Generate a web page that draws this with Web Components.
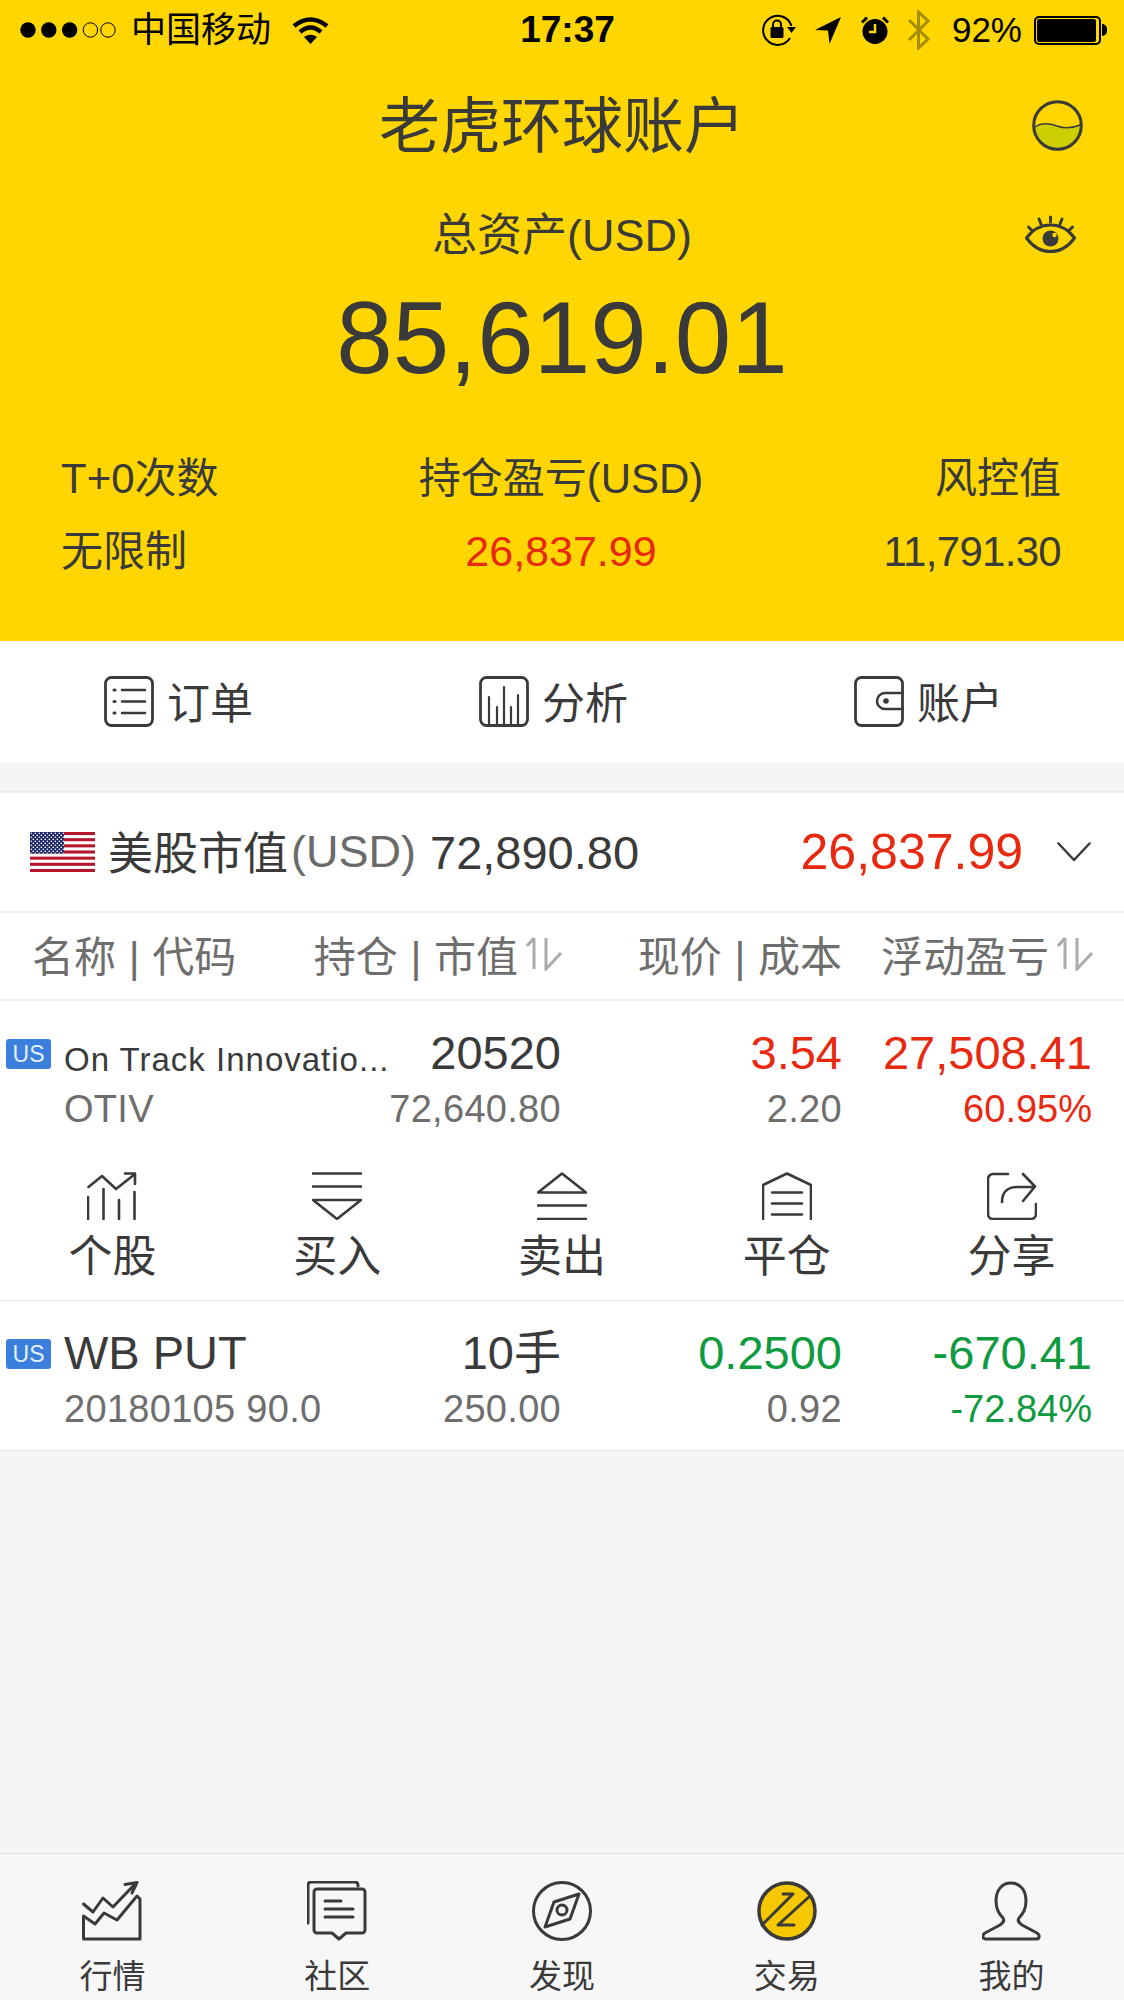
<!DOCTYPE html>
<html lang="zh">
<head>
<meta charset="utf-8">
<title>老虎环球账户</title>
<style>
    html, body { margin: 0; height: 100%; }
    body {
        font-family: "Liberation Sans", "Noto Sans CJK SC", sans-serif;
        color: #3a3a3a;
        background: #f5f5f5;
    }
</style>
</head>
<body>
<app-shell>
    <status-bar></status-bar>
    <account-header></account-header>
    <action-bar></action-bar>
    <market-summary></market-summary>
    <position-header></position-header>
    <position-row name="On Track Innovatio..." small-name code="OTIV" qty="20520" value="72,640.80"
        price="3.54" cost="2.20" pnl="27,508.41" pct="60.95%" tone="up">
        <tool-row></tool-row>
    </position-row>
    <position-row name="WB PUT" code="20180105 90.0" qty="10手" value="250.00"
        price="0.2500" cost="0.92" pnl="-670.41" pct="-72.84%" tone="down"></position-row>
    <tab-bar></tab-bar>
</app-shell>

<script>
const LINE = 'fill="none" stroke="#3a3a3a" stroke-linecap="round" stroke-linejoin="round"';

class AppShell extends HTMLElement {
    constructor() {
        super();
        this.attachShadow({ mode: 'open' });
    }
    connectedCallback() {
        this.shadowRoot.innerHTML = `
            <style>
                :host { display: flex; flex-direction: column; height: 2000px; overflow: hidden; }
                ::slotted(tab-bar) { margin-top: auto; }
            </style>
            <slot></slot>
        `;
    }
}
customElements.define('app-shell', AppShell);

class StatusBar extends HTMLElement {
    constructor() {
        super();
        this.attachShadow({ mode: 'open' });
    }
    connectedCallback() {
        this.shadowRoot.innerHTML = `
            <style>
                :host {
                    display: grid;
                    grid-template-columns: 1fr auto 1fr;
                    align-items: center;
                    height: 60px;
                    padding: 0 17px 0 20px;
                    background: #ffd600;
                    color: #000;
                    font-size: 35px;
                }
                .left, .right { display: flex; align-items: center; }
                .right { justify-content: flex-end; }
                .carrier { margin: 0 21px 0 15px; line-height: 60px; }
                .time { font-weight: 700; font-size: 37px; margin-left: 8px; }
                .battery { width: 67px; height: 29px; box-sizing: border-box; border: 2px solid #000; border-radius: 5px; padding: 1px; background: #ffd600; margin-left: 12px; }
                .battery i { display: block; height: 100%; width: 96%; background: #000; border-radius: 2px; }
                .nub { width: 5px; height: 12px; background: #000; border-radius: 0 5px 5px 0; margin-left: 1px; }
                svg { display: block; flex: none; }
            </style>
            <div class="left">
                <svg width="96" height="16" viewBox="0 0 96 16">
                    <circle cx="8" cy="8" r="7.7"/>
                    <circle cx="28.8" cy="8" r="7.7"/>
                    <circle cx="49.6" cy="8" r="7.7"/>
                    <circle cx="70.4" cy="8" r="7.2" fill="none" stroke="#000" stroke-width="1"/>
                    <circle cx="88" cy="8" r="7.2" fill="none" stroke="#000" stroke-width="1"/>
                </svg>
                <span class="carrier">中国移动</span>
                <svg width="37" height="28" viewBox="0 0 37 28">
                    <path d="M2 10Q18.500 -3 35 10" fill="none" stroke="#000" stroke-width="4.500"/>
                    <path d="M8 16Q18.500 7 29 16" fill="none" stroke="#000" stroke-width="4.500"/>
                    <path d="M12 21Q18.500 16.500 25 21L18.500 28Z"/>
                </svg>
            </div>
            <div class="time">17:37</div>
            <div class="right">
                <svg width="34" height="32" viewBox="0 0 34 32" style="margin-right:19px">
                    <path d="M28 24A14.500 14.500 0 1 1 29.500 12" fill="none" stroke="#000" stroke-width="2"/>
                    <path d="M25 13H34L29.500 19Z"/>
                    <rect x="8.500" y="13" width="13" height="11" rx="1.500"/>
                    <path d="M11 14V10.500a4 4 0 0 1 8 0V14" fill="none" stroke="#000" stroke-width="2"/>
                </svg>
                <svg width="26" height="27" viewBox="0 0 26 27" style="margin-right:20px">
                    <path d="M26 0L0 13L13 13.500L14.500 27Z"/>
                </svg>
                <svg width="28" height="28" viewBox="0 0 28 28" style="margin-right:18px">
                    <circle cx="14" cy="15.500" r="12.500"/>
                    <path d="M14 8V16H8" fill="none" stroke="#ffd600" stroke-width="2.500"/>
                    <path d="M1 6.500L6 1.500M27 6.500L22 1.500" stroke="#000" stroke-width="3"/>
                </svg>
                <svg width="23" height="40" viewBox="0 0 23 40" style="margin-right:22px">
                    <path d="M2 10L21 29L11.500 38V2L21 11L2 30" fill="none" stroke="#a58d05" stroke-width="3"/>
                </svg>
                <span>92%</span>
                <div class="battery"><i></i></div>
                <div class="nub"></div>
            </div>
        `;
    }
}
customElements.define('status-bar', StatusBar);

class StatCell extends HTMLElement {
    constructor() {
        super();
        this.attachShadow({ mode: 'open' });
    }
    connectedCallback() {
        const alinear = this.getAttribute('align') || 'left';
        const tono = this.getAttribute('tone') === 'up' ? '#e8290f' : 'inherit';
        this.shadowRoot.innerHTML = `
            <style>
                :host { display: block; text-align: ${alinear}; font-size: 42px; line-height: 73px; }
                .value { color: ${tono}; }
                :host([tone]) .value { font-size: 43px; }
                :host([tight]) .value { letter-spacing: -0.7px; }
            </style>
            <div>${this.getAttribute('label')}</div>
            <div class="value">${this.getAttribute('value')}</div>
        `;
    }
}
customElements.define('stat-cell', StatCell);

class AccountHeader extends HTMLElement {
    constructor() {
        super();
        this.attachShadow({ mode: 'open' });
    }
    connectedCallback() {
        this.shadowRoot.innerHTML = `
            <style>
                :host {
                    display: block;
                    position: relative;
                    height: 581px;
                    background: #ffd600;
                    text-align: center;
                }
                .title { font-size: 61px; line-height: 80px; padding-top: 27px; }
                .label { font-size: 45px; line-height: 60px; margin-top: 39px; }
                .amount { font-size: 101.500px; line-height: 120px; margin-top: 12px; }
                .stats {
                    display: grid;
                    grid-template-columns: 1fr 1fr 1fr;
                    padding: 0 63px 0 61px;
                    margin-top: 44px;
                }
                .globe, .eye { position: absolute; }
                .globe { left: 1032px; top: 40px; }
                .eye { left: 1025px; top: 155px; }
            </style>
            <div class="title">老虎环球账户</div>
            <div class="label">总资产(USD)</div>
            <div class="amount">85,619.01</div>
            <div class="stats">
                <stat-cell label="T+0次数" value="无限制"></stat-cell>
                <stat-cell align="center" label="持仓盈亏(USD)" value="26,837.99" tone="up"></stat-cell>
                <stat-cell align="right" label="风控值" value="11,791.30" tight></stat-cell>
            </div>
            <svg class="globe" width="51" height="51" viewBox="0 0 51 51">
                <path d="M3 27C10 22 17 23 25 26C33 29 41 28 48 25C48 40 38 49 25.500 49C13 49 3 40 3 27Z" fill="#cdcf00"/>
                <path d="M3 27C10 22 17 23 25 26C33 29 41 28 48 25" fill="none" stroke="#3a3a3a" stroke-width="1.500"/>
                <circle cx="25.500" cy="25.500" r="23.800" fill="none" stroke="#3a3a3a" stroke-width="3"/>
            </svg>
            <svg class="eye" width="51" height="38" viewBox="0 0 51 38" ${LINE}>
                <path d="M1.500 23C8 14 16 10 25.500 10C35 10 43 14 49.500 23C43 32 35 36.500 25.500 36.500C16 36.500 8 32 1.500 23Z" stroke-width="3"/>
                <circle cx="25.500" cy="23.500" r="8" fill="#3a3a3a" stroke="none"/>
                <circle cx="29.500" cy="20" r="2.200" fill="#ffd600" stroke="none"/>
                <path d="M25.500 2V7M14 4L16 9M37 4L35 9M3.500 12L7 15.500M47.500 12L44 15.500" stroke-width="3"/>
            </svg>
        `;
    }
}
customElements.define('account-header', AccountHeader);

class ActionBar extends HTMLElement {
    constructor() {
        super();
        this.attachShadow({ mode: 'open' });
    }
    connectedCallback() {
        const acciones = [
            {
                texto: "订单",
                icono: `<path d="M18 14H41M18 25.500H41M18 37H41" stroke-width="2.500"/>
                        <path d="M10 14H11M10 25.500H11M10 37H11" stroke-width="3"/>`
            },
            {
                texto: "分析",
                icono: `<path d="M10 49V21M18 49V31M25 49V11M32 49V31M39 49V19" stroke-width="2.200"/>`
            },
            {
                texto: "账户",
                icono: `<path d="M49 17H31a8 8 0 0 0 0 16H49" stroke-width="2.500"/>
                        <circle cx="32" cy="25" r="2.800" fill="#3a3a3a" stroke="none"/>`
            }
        ];
        this.shadowRoot.innerHTML = `
            <style>
                :host {
                    display: flex;
                    gap: 226px;
                    align-items: center;
                    height: 121px;
                    padding-left: 104px;
                    background: #fff;
                    border-bottom: 29px solid #f5f5f5;
                    font-size: 43px;
                    white-space: nowrap;
                }
                .item { display: flex; align-items: center; gap: 13px; }
                span { transform: translateY(-2px); }
                svg { display: block; flex: none; }
            </style>
            ${acciones.map((accion)=>`
                <div class="item">
                    <svg width="50" height="51" viewBox="0 0 50 51" ${LINE}>
                        <rect x="1.500" y="1.500" width="47" height="48" rx="6" stroke-width="2.800"/>
                        ${accion.icono}
                    </svg>
                    <span>${accion.texto}</span>
                </div>
            `).join('')}
        `;
    }
}
customElements.define('action-bar', ActionBar);

class MarketSummary extends HTMLElement {
    constructor() {
        super();
        this.attachShadow({ mode: 'open' });
    }
    connectedCallback() {
        const franjas = [0, 2, 4, 6, 8, 10, 12].map((n)=>
            `<rect y="${(n * 40 / 13).toFixed(2)}" width="65" height="3.08" fill="#b5162e"/>`
        ).join('');
        this.shadowRoot.innerHTML = `
            <style>
                :host {
                    display: flex;
                    align-items: center;
                    height: 118px;
                    padding: 0 33px 0 30px;
                    background: #fff;
                    border-top: 2px solid #ececec;
                    border-bottom: 2px solid #ececec;
                    font-size: 45px;
                }
                svg { display: block; flex: none; }
                .flag { margin-right: 13px; }
                .cjk { transform: translateY(-2px); }
                .usd { color: #6a6a6a; margin: 0 14px 0 3px; }
                .valor { font-size: 47px; }
                .pnl { margin-left: auto; color: #e8290f; font-size: 50px; }
                .chevron { margin-left: 34px; }
            </style>
            <svg class="flag" width="65" height="40" viewBox="0 0 65 40">
                <defs>
                    <pattern id="estrellas" width="4" height="4" patternUnits="userSpaceOnUse">
                        <circle cx="1.300" cy="1.300" r="0.800" fill="#fff"/>
                        <circle cx="3.300" cy="3.300" r="0.800" fill="#fff"/>
                    </pattern>
                </defs>
                <rect width="65" height="40" fill="#fff"/>
                ${franjas}
                <rect width="34" height="21.500" fill="#1f2a6b"/>
                <rect width="34" height="21.500" fill="url(#estrellas)"/>
            </svg>
            <span class="cjk">美股市值</span><span class="usd">(USD)</span>
            <span class="valor">72,890.80</span>
            <span class="pnl">26,837.99</span>
            <svg class="chevron" width="34" height="20" viewBox="0 0 34 20" ${LINE}>
                <path d="M1.500 1.500L17 18L32.500 1.500" stroke-width="2.500"/>
            </svg>
        `;
    }
}
customElements.define('market-summary', MarketSummary);

class PositionHeader extends HTMLElement {
    constructor() {
        super();
        this.attachShadow({ mode: 'open' });
    }
    connectedCallback() {
        const orden = `<svg width="37" height="35" viewBox="0 0 37 35" fill="none" stroke="#ababab" stroke-width="3">
            <path d="M8 2V33M8 2L1 10M20 2V33L35 17"/>
        </svg>`;
        this.shadowRoot.innerHTML = `
            <style>
                :host {
                    display: grid;
                    grid-template-columns: 385px 176px 281px 250px;
                    align-items: center;
                    height: 86px;
                    padding-right: 32px;
                    background: #fff;
                    border-bottom: 2px solid #ececec;
                    color: #6e6e6e;
                    font-size: 42px;
                    word-spacing: 1px;
                    white-space: nowrap;
                }
                div { display: flex; justify-content: flex-end; align-items: center; gap: 8px; padding-bottom: 5px; }
                .name { justify-content: flex-start; padding-left: 32px; }
                svg { display: block; flex: none; margin-right: -2px; }
            </style>
            <div class="name">名称 | 代码</div>
            <div>持仓 | 市值${orden}</div>
            <div>现价 | 成本</div>
            <div>浮动盈亏${orden}</div>
        `;
    }
}
customElements.define('position-header', PositionHeader);

class PositionRow extends HTMLElement {
    constructor() {
        super();
        this.attachShadow({ mode: 'open' });
    }
    connectedCallback() {
        const dato = (nombre)=> this.getAttribute(nombre);
        const tono = dato('tone') === 'up' ? '#e8290f' : '#0e9a3f';
        this.shadowRoot.innerHTML = `
            <style>
                :host {
                    display: block;
                    background: #fff;
                    border-bottom: 1px solid #e6e6e6;
                }
                .info {
                    display: grid;
                    grid-template-columns: 385px 176px 281px 250px;
                    grid-auto-rows: 57px;
                    padding: 24px 32px 11px 0;
                    font-size: 47px;
                    line-height: 55px;
                    text-align: right;
                    white-space: nowrap;
                }
                :host([small-name]) .info { padding-bottom: 0; }
                .name { display: flex; align-items: flex-start; padding-left: 6px; gap: 13px; text-align: left; }
                .badge {
                    flex: none;
                    width: 45px;
                    height: 30px;
                    margin-top: 14px;
                    border-radius: 3px;
                    background: #3b7fdc;
                    color: #e4efff;
                    font-size: 23px;
                    line-height: 30px;
                    text-align: center;
                }
                :host([small-name]) .title { font-size: 33px; letter-spacing: 1px; padding-top: 7px; }
                .sub { font-size: 38px; color: #6e6e6e; letter-spacing: 0.3px; }
                .code { padding-left: 64px; text-align: left; }
                .tone { color: ${tono}; }
                .pct { font-size: 38px; }
            </style>
            <div class="info">
                <div class="name"><div class="badge">US</div><div class="title">${dato('name')}</div></div>
                <div>${dato('qty')}</div>
                <div class="tone">${dato('price')}</div>
                <div class="tone">${dato('pnl')}</div>
                <div class="sub code">${dato('code')}</div>
                <div class="sub">${dato('value')}</div>
                <div class="sub">${dato('cost')}</div>
                <div class="tone pct">${dato('pct')}</div>
            </div>
            <slot></slot>
        `;
    }
}
customElements.define('position-row', PositionRow);

class ToolRow extends HTMLElement {
    constructor() {
        super();
        this.attachShadow({ mode: 'open' });
    }
    connectedCallback() {
        const herramientas = [
            {
                texto: "个股",
                icono: `<path d="M1 25V47M16.500 17V47M32 28V47M47.500 20V47M1.500 15L15 4L29 17L48 2M38 1.500H48V12"/>`
            },
            {
                texto: "买入",
                icono: `<path d="M1 1.500H49M1 14.500H49M1 28H49L25 47Z"/>`
            },
            {
                texto: "卖出",
                icono: `<path d="M25 1.500L1 20.500H49ZM1 33.500H49M1 47H49"/>`
            },
            {
                texto: "平仓",
                icono: `<path d="M1 48V13L25 1.500L49 13V48M10 20.500H40M10 31.500H40M10 42.500H40"/>`
            },
            {
                texto: "分享",
                icono: `<path d="M21 2H6a5 5 0 0 0-5 5V42a5 5 0 0 0 5 5H44a5 5 0 0 0 5-5V32M36 2L48 14.500L36 29M15 30C15 20 21 15 30 15H47"/>`
            }
        ];
        this.shadowRoot.innerHTML = `
            <style>
                :host {
                    display: grid;
                    grid-template-columns: repeat(5, 1fr);
                    padding: 33px 0 18px;
                    font-size: 44px;
                    text-align: center;
                }
                svg { display: block; margin: 0 auto 12px; }
                .label { line-height: 50px; }
            </style>
            ${herramientas.map((herramienta)=>`
                <div>
                    <svg width="50" height="48" viewBox="0 0 50 48" ${LINE} stroke-width="2.600">${herramienta.icono}</svg>
                    <div class="label">${herramienta.texto}</div>
                </div>
            `).join('')}
        `;
    }
}
customElements.define('tool-row', ToolRow);

class TabBar extends HTMLElement {
    constructor() {
        super();
        this.attachShadow({ mode: 'open' });
    }
    connectedCallback() {
        const pestanas = [
            {
                texto: "行情",
                icono: `<path d="M1.500 23L11 31L21 17L31 26L54 2M43 3.500L55 1.500L50 12"/>
                        <path d="M1.500 35L13 43L22 32L35 39L55 15L58 18V58H1.500Z"/>`
            },
            {
                texto: "社区",
                icono: `<path d="M51 5V4a3 3 0 0 0-3-3H4a3 3 0 0 0-3 3V42"/>
                        <path d="M10 8H55a3 3 0 0 1 3 3V49a3 3 0 0 1-3 3H39L32 58L25 52H10a3 3 0 0 1-3-3V11a3 3 0 0 1 3-3Z"/>
                        <path d="M18 20H34M18 28H46M18 36H46"/>`
            },
            {
                texto: "发现",
                icono: `<circle cx="30" cy="30" r="28.500"/>
                        <path d="M47 13L38 38L13 46L22 21Z"/>
                        <circle cx="30" cy="29" r="5"/>`
            },
            {
                texto: "交易",
                icono: `<circle cx="30" cy="30" r="28" fill="#f6c800" stroke-width="3.500"/>
                        <path d="M26 13H36L5 44M53 15L21 44H37"/>`
            },
            {
                texto: "我的",
                icono: `<path d="M29 2C20 2 14 9 14 20C14 28 17 33 21 37C23 40 21 42 18 44L3 52C0 54 0 58 4 58H54C58 58 58 54 55 52L40 44C37 42 35 40 37 37C41 33 44 28 44 20C44 9 38 2 29 2Z"/>`
            }
        ];
        this.shadowRoot.innerHTML = `
            <style>
                :host {
                    display: grid;
                    grid-template-columns: repeat(5, 1fr);
                    height: 147px;
                    box-sizing: border-box;
                    padding-top: 27px;
                    background: #f7f7f7;
                    border-top: 1px solid #dedede;
                    font-size: 33px;
                    text-align: center;
                }
                svg { display: block; margin: 0 auto 14px; }
                .label { line-height: 44px; }
            </style>
            ${pestanas.map((pestana)=>`
                <div>
                    <svg width="60" height="60" viewBox="0 0 60 60" ${LINE} stroke-width="3">${pestana.icono}</svg>
                    <div class="label">${pestana.texto}</div>
                </div>
            `).join('')}
        `;
    }
}
customElements.define('tab-bar', TabBar);
</script>
</body>
</html>
